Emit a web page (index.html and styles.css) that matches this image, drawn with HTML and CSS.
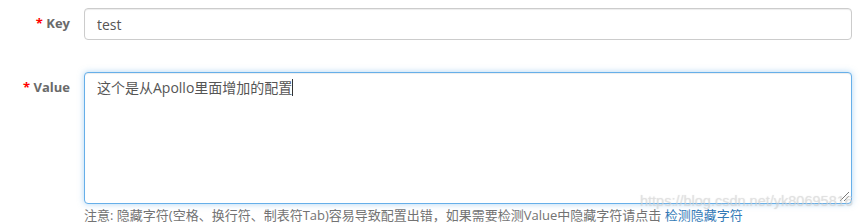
FILE: index.html
```html
<!DOCTYPE html>
<html>
<head>
<meta charset="utf-8">
<title>Apollo - 新增配置</title>
<link rel="stylesheet" href="styles.css">
</head>
<body>
<form class="form-horizontal">
  <div class="form-group key-group">
    <label class="control-label"><span class="required">*</span> Key</label>
    <div class="field">
      <input class="form-control" type="text" value="test">
    </div>
  </div>
  <div class="form-group">
    <label class="control-label"><span class="required">*</span> Value</label>
    <div class="field">
      <div class="form-control textarea focus">这个是从Apollo里面增加的配置<span class="caret"></span><span class="grip"></span></div>
      <p class="help-block">注意: 隐藏字符(空格、换行符、制表符Tab)容易导致配置出错，如果需要检测Value中隐藏字符请点击 <a href="#">检测隐藏字符</a></p>
    </div>
  </div>
</form>
<div class="watermark">https://blog.csdn.net/yk80695816</div>
</body>
</html>
```

FILE: styles.css
```css
body {
 margin: 0;
 background: #fff;
 font-family: "Open Sans", "Noto Sans CJK SC", sans-serif;
 font-size: 14px;
 color: #333;
 position: relative;
 width: 863px;
 height: 224px;
 overflow: hidden;
}

.form-horizontal {
 padding-top: 8px;
}

.form-group {
 display: flex;
 align-items: flex-start;
}

.key-group {
 margin-bottom: 32px;
}

.control-label {
 width: 70px;
 text-align: right;
 padding-top: 5px;
 line-height: 20px;
 font-size: 13px;
 font-weight: bold;
 color: #6a6a6a;
 flex-shrink: 0;
}

.required {
 color: #f00;
}

.field {
 margin-left: 14px;
 width: 768px;
}

.form-control {
 display: block;
 box-sizing: border-box;
 width: 100%;
 height: 32px;
 padding: 5px 12px;
 font-family: "Open Sans", "Noto Sans CJK SC", sans-serif;
 font-size: 14px;
 line-height: 20px;
 color: #555;
 background: #fff;
 border: 1px solid #ccc;
 border-radius: 4px;
 box-shadow: inset 0 1px 1px rgba(0,0,0,.075);
 outline: none;
}

.textarea {
 position: relative;
 height: 132px;
 padding-top: 5px;
}

.textarea.focus {
 border-color: #66afe9;
 box-shadow: inset 0 1px 1px rgba(0,0,0,.075), 0 0 6px rgba(102,175,233,.5);
}

.caret {
 display: inline-block;
 width: 1px;
 height: 17px;
 background: #333;
 vertical-align: -3px;
}

.grip {
 position: absolute;
 right: 2px;
 bottom: 2px;
 width: 9px;
 height: 9px;
 background: linear-gradient(135deg, transparent 45%, #777 45%, #777 52%, transparent 52%, transparent 70%, #777 70%, #777 77%, transparent 77%);
}

.help-block {
 margin: 2px 0 0;
 font-size: 13px;
 line-height: 18px;
 color: #737373;
 white-space: nowrap;
}

.help-block a {
 color: #337ab7;
 text-decoration: none;
}

.watermark {
 position: absolute;
 left: 640px;
 top: 193px;
 font-family: "Liberation Sans", sans-serif;
 font-size: 14.5px;
 color: rgba(225,225,225,.55);
 text-shadow: 0 0 1px rgba(150,150,150,.35);
 pointer-events: none;
}
```
